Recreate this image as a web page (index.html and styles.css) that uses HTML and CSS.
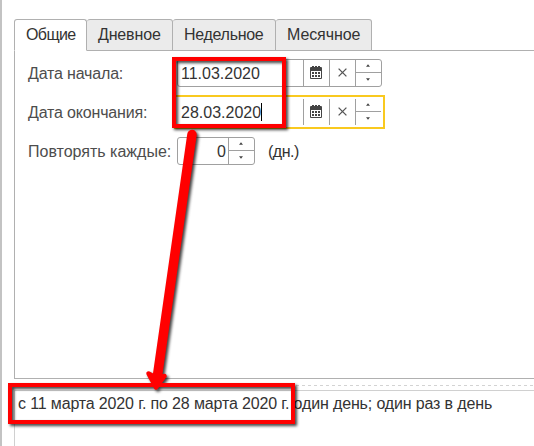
FILE: index.html
```html
<!DOCTYPE html>
<html lang="ru">
<head>
<meta charset="utf-8">
<title>Расписание</title>
<link rel="stylesheet" href="styles.css">
</head>
<body>
<svg class="defs" width="0" height="0">
  <symbol id="cal" viewBox="0 0 12 13">
    <path fill="#444" fill-rule="evenodd" d="M0 2q0-1 1-1h10q1 0 1 1v10q0 1-1 1H1q-1 0-1-1zM1 5v7h10V5z"/>
    <path fill="#444" d="M2 0h2v2H2zM5 0h2v2H5zM8 0h2v2H8zM2 6h2v2H2zM5 6h2v2H5zM8 6h2v2H8zM2 9h2v2H2zM5 9h2v2H5zM8 9h2v2H8z"/>
  </symbol>
  <symbol id="clear" viewBox="0 0 9 9"><path d="M.6.6l7.8 7.8M8.4.6L.6 8.4" stroke="#555" stroke-width="1.3"/></symbol>
  <symbol id="up" viewBox="0 0 4 3"><path fill="#444" d="M0 2.800L2 .2l2 2.600z"/></symbol>
  <symbol id="down" viewBox="0 0 4 3"><path fill="#444" d="M0 .2h4L2 2.800z"/></symbol>
</svg>
<main class="window">
  <nav class="tabs">
    <div class="tab general active"><span>Общие</span></div>
    <div class="tab daily"><span>Дневное</span></div>
    <div class="tab weekly"><span>Недельное</span></div>
    <div class="tab monthly"><span>Месячное</span></div>
  </nav>
  <section class="panel">
    <div class="row">
      <label class="label start">Дата начала:</label>
      <div class="field">
        <span class="value">11.03.2020</span>
        <span class="button"><svg width="12" height="13"><use href="#cal"/></svg></span>
        <span class="button"><svg width="9" height="9"><use href="#clear"/></svg></span>
        <span class="spin"><i><svg width="4" height="3"><use href="#up"/></svg></i><i><svg width="4" height="3"><use href="#down"/></svg></i></span>
      </div>
    </div>
    <div class="row">
      <label class="label end">Дата окончания:</label>
      <div class="field focused">
        <span class="value">28.03.2020<b class="caret"></b></span>
        <span class="button"><svg width="12" height="13"><use href="#cal"/></svg></span>
        <span class="button"><svg width="9" height="9"><use href="#clear"/></svg></span>
        <span class="spin"><i><svg width="4" height="3"><use href="#up"/></svg></i><i><svg width="4" height="3"><use href="#down"/></svg></i></span>
      </div>
    </div>
    <div class="row">
      <label class="label repeat">Повторять каждые:</label>
      <div class="field small">
        <span class="value">0</span>
        <span class="spin"><i><svg width="4" height="3"><use href="#up"/></svg></i><i><svg width="4" height="3"><use href="#down"/></svg></i></span>
      </div>
      <span class="unit">(дн.)</span>
    </div>
  </section>
  <div class="splitter"></div>
  <footer class="summary"><span>с 11 марта 2020 г. по 28 марта 2020 г. один день; один раз в день</span></footer>
</main>
<svg class="marks" width="534" height="446" viewBox="0 0 534 446">
  <g fill="none" stroke="#f00">
    <rect x="174" y="59" width="110" height="67" stroke-width="4"/>
    <path d="M192 134.500L157 379" stroke-width="9.500" stroke-linecap="round"/>
    <rect x="10" y="385" width="283" height="37" stroke-width="4"/>
  </g>
  <path d="M148.500 373.500l7 4 9-1.500-8.500 11.500z" fill="#f00" stroke="#f00" stroke-width="4.500" stroke-linejoin="round"/>
</svg>
</body>
</html>
```
FILE: styles.css
```css
* { box-sizing: border-box; }
body {
  margin: 0;
  width: 534px;
  height: 446px;
  overflow: hidden;
  background: #fff;
  color: #333;
  font: 16px/20px "Liberation Sans", Arial, sans-serif;
}
.defs { display: none; }
.window {
  height: 446px;
  display: flex;
  flex-direction: column;
  border-left: 2px solid #c3c3c3;
  padding: 19px 0 0 12px;
}
.tabs {
  display: flex;
  height: 32px;
  flex: none;
  box-shadow: inset 0 -1px #b0b0b0;
}
.tab {
  border: 1px solid #b0b0b0;
  border-left-width: 0;
  border-radius: 3px 3px 0 0;
  background: #ebebeb;
  padding: 5px 0 0 11px;
  white-space: nowrap;
}
.tab.active {
  background: #fff;
  border-left-width: 1px;
  border-bottom-color: #fff;
}
.general { width: 73px; letter-spacing: -.6px; }
.daily { width: 86px; letter-spacing: -.15px; }
.weekly { width: 103px; letter-spacing: -.3px; }
.monthly { width: 96px; letter-spacing: -.1px; }
.panel {
  height: 328px;
  flex: none;
  border-left: 1px solid #b0b0b0;
  border-bottom: 1px solid #b0b0b0;
  padding: 2px 0 0 13px;
}
.row {
  display: flex;
  align-items: center;
  height: 39px;
}
.label {
  width: 149px;
  flex: none;
  padding-top: 2px;
  color: #4d4d4d;
  white-space: nowrap;
}
.start, .end { letter-spacing: -.17px; }
.field {
  display: flex;
  width: 205px;
  height: 28px;
  border: 1px solid #a0a0a0;
  border-radius: 3px;
}
.value {
  flex: 1;
  padding: 4px 0 0 3px;
  display: flex;
  white-space: nowrap;
}
.button {
  width: 26px;
  border-left: 1px solid #a0a0a0;
  display: flex;
  align-items: center;
  justify-content: center;
  padding-right: 1px;
}
.spin {
  width: 26px;
  border-left: 1px solid #a0a0a0;
  display: flex;
  flex-direction: column;
}
.spin i {
  flex: 1;
  display: flex;
  align-items: center;
  justify-content: center;
  padding-right: 1px;
}
.spin i:first-child { border-bottom: 1px solid #a0a0a0; }
.focused {
  width: 211px;
  height: 34px;
  margin-left: -3px;
  border: 2px solid #f9c91f;
  border-radius: 0;
  padding: 2px;
}
.caret { width: 1px; height: 18px; background: #000; }
.small { width: 78px; }
.small .value { justify-content: flex-end; padding-right: 2px; }
.unit { margin-left: 13px; padding-top: 2px; letter-spacing: -.5px; }
.splitter {
  height: 11px;
  flex: none;
  background: repeating-linear-gradient(90deg, #d3d3d3 0 3px, transparent 3px 6px) 0 6px / 100% 1px no-repeat;
}
.summary {
  flex: 1;
  border: solid #d0d0d0;
  border-width: 1px 0 0 1px;
  padding: 3px 0 0 3px;
  letter-spacing: -.145px;
  white-space: nowrap;
}
.marks {
  position: absolute;
  left: 0;
  top: 0;
  filter: drop-shadow(2px 2px 1.5px rgba(0, 0, 0, .75));
}
```
